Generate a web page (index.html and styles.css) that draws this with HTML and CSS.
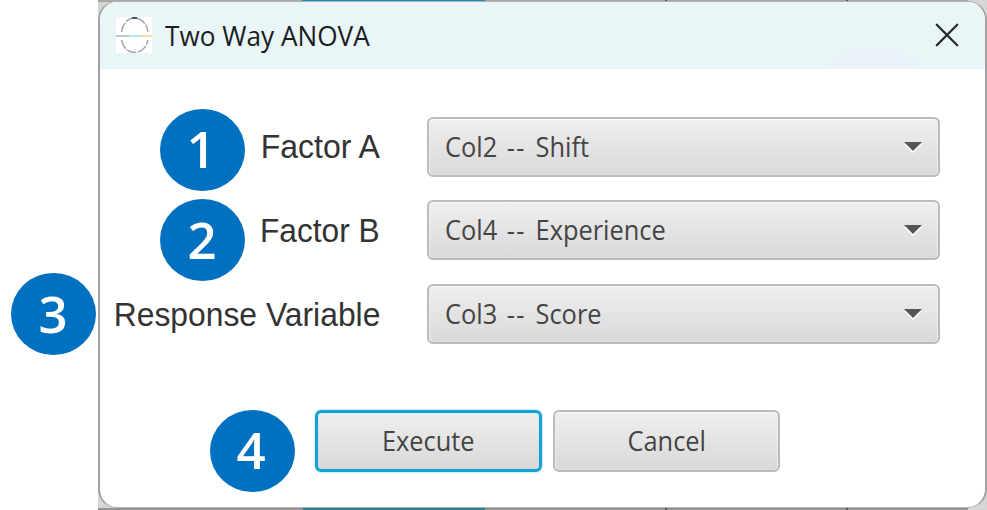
FILE: index.html
```
<!DOCTYPE html>
<html lang="en">
<head>
<meta charset="utf-8">
<title>Two Way ANOVA</title>
<link rel="stylesheet" href="styles.css">
</head>
<body>
<main class="stage">
  <div class="sheet">
    <section class="dialog">
      <header class="titlebar">
        <svg class="app-icon" width="36" height="36" viewBox="0 0 36 36" fill="none">
          <rect width="36" height="36" fill="#fff"/>
          <path d="M5.500 15C6.500 7 11.500 1 18.500 1S31 7 32 15" stroke="#a3a7ab" stroke-width="1.500" stroke-dasharray="10 1.500"/>
          <path d="M16 1h5" stroke="#42576a" stroke-width="2"/>
          <path d="M5.500 23C7 30 11.500 35.500 18.500 35.500S30.500 30 32 23" stroke="#a3a7ab" stroke-width="1.500" stroke-dasharray="10 1.500"/>
          <path d="M0 19h13" stroke="#a9b5be" stroke-width="1.600"/>
          <path d="M13 19h12" stroke="#9fe0ec" stroke-width="1.600"/>
          <path d="M25 19h11" stroke="#f6cd92" stroke-width="1.600"/>
        </svg>
        <h1 class="title"><span class="fit fit-title">Two Way ANOVA</span></h1>
        <svg class="close" width="24" height="24" viewBox="0 0 24 24"><path d="M1.800 1.800l20.400 20.400M22.200 1.800L1.800 22.200" stroke="#24292b" stroke-width="2.300" stroke-linecap="round"/></svg>
      </header>
      <div class="form">
        <div class="label"><span class="fit fit-a">Factor A</span></div>
        <div class="select"><span class="fit fit-value">Col2 <span class="dashes">--</span> Shift</span><svg class="arrow" width="18" height="11" viewBox="0 0 18 11"><path d="M0 2h18L9 11z" fill="#fff"/><path d="M0 0h18L9 9z" fill="#555"/></svg></div>
        <div class="label"><span class="fit fit-b">Factor B</span></div>
        <div class="select"><span class="fit fit-value">Col4 <span class="dashes">--</span> Experience</span><svg class="arrow" width="18" height="11" viewBox="0 0 18 11"><path d="M0 2h18L9 11z" fill="#fff"/><path d="M0 0h18L9 9z" fill="#555"/></svg></div>
        <div class="label"><span class="fit fit-response">Response Variable</span></div>
        <div class="select"><span class="fit fit-value">Col3 <span class="dashes">--</span> Score</span><svg class="arrow" width="18" height="11" viewBox="0 0 18 11"><path d="M0 2h18L9 11z" fill="#fff"/><path d="M0 0h18L9 9z" fill="#555"/></svg></div>
      </div>
      <div class="actions">
        <button class="button primary"><span class="fit fit-button">Execute</span></button>
        <button class="button"><span class="fit fit-button">Cancel</span></button>
      </div>
    </section>
  </div>
  <div class="badge badge-1">1</div>
  <div class="badge badge-2">2</div>
  <div class="badge badge-3">3</div>
  <div class="badge badge-4">4</div>
</main>
</body>
</html>
```
FILE: styles.css
```
* { box-sizing: border-box; }
body { margin: 0; background: #fff; overflow: hidden; }
.stage {
  position: relative;
  width: 987px;
  height: 510px;
  padding-left: 98px;
  font-family: "Open Sans", "Noto Sans", sans-serif;
}
.sheet {
  height: 510px;
  padding: 1px 0 2px;
  background:
    linear-gradient(90deg, transparent 204px, #168fb2 204px 387px, transparent 387px) 0 0 / 100% 3px no-repeat,
    linear-gradient(90deg, transparent 205px, #247f91 205px 387px, transparent 387px) 0 100% / 100% 3px no-repeat,
    linear-gradient(90deg, transparent 567px, #555 567px 569px, transparent 569px 748px, #555 748px 750px, transparent 750px) 0 0 / 100% 100% no-repeat,
    linear-gradient(#aaa6a6, #aaa6a6) 0 0 / 870px 2px no-repeat,
    linear-gradient(#929292, #929292) 0 100% / 870px 2px no-repeat,
    #d6d6d6;
}
.dialog {
  height: 507px;
  overflow: hidden;
  background: #fff;
  border: 1px solid #b2b2b2;
  border-left: 2px solid #a2a2a2;
  border-right: 2px solid #a2a2a2;
  border-radius: 19px;
}
.titlebar {
  display: flex;
  align-items: center;
  height: 67px;
  padding: 0 26px 0 16px;
  background: radial-gradient(ellipse 60px 24px at 775px 64px, #eaf2fa, transparent), #e9f5f7;
}
.app-icon { display: block; margin-top: -1px; }
.title { flex: 1; margin: -1px 0 0 13px; font-size: 28px; font-weight: 400; line-height: 40px; color: #1b1e1f; }
.close { margin-top: -1px; }
.fit { display: inline-block; white-space: nowrap; transform-origin: left center; }
.fit-title { transform: scaleX(.935); }
.form {
  display: grid;
  grid-template-columns: 280px 513px;
  grid-template-rows: repeat(3, 60px);
  gap: 23.5px 47px;
  margin-top: 47.5px;
}
.label {
  display: flex;
  align-items: center;
  justify-content: flex-end;
  font-family: "Liberation Sans", sans-serif;
  font-size: 33px;
  color: #333;
}
.label .fit { transform-origin: right center; }
.fit-a { transform: scaleX(.97); }
.fit-b { transform: scaleX(.96); padding-top: 2px; }
.fit-response { transform: scaleX(.965); padding-top: 2px; }
.select, .button {
  border: 2px solid #bbb;
  border-radius: 6px;
  background: linear-gradient(#efefef, #d9d9d9);
  box-shadow: inset 0 1px 1px #fafafa, inset 1px 0 1px #eee, inset -1px 0 1px #eee;
  color: #444;
  font-family: inherit;
  font-size: 27px;
}
.select { display: flex; align-items: center; justify-content: space-between; padding: 0 16px; }
.fit-value { transform: scaleX(.94); word-spacing: 3.2px; margin-top: -1px; }
.dashes { letter-spacing: 1.5px; }
.arrow { display: block; margin-top: 1px; }
.actions { display: flex; gap: 11px; margin: 66.500px 0 0 215px; }
.button { width: 227px; height: 62px; padding: 0 0 2px; }
.button .fit { transform: scaleX(.94); transform-origin: center; }
.primary { border: 3px solid #12a3d6; box-shadow: 0 0 2px #72c7e2, inset 0 0 1px #79c8e0; }
.badge {
  position: absolute;
  display: flex;
  align-items: center;
  justify-content: center;
  width: 85px;
  height: 82px;
  padding: 0 1px 2px 0;
  border-radius: 50%;
  background: #0070c0;
  color: #fff;
  font-size: 51px;
  font-weight: 600;
  line-height: 1;
}
.badge-1 { left: 160px; top: 109px; padding: 0 3px 4px 0; }
.badge-2 { left: 160px; top: 199px; }
.badge-3 { left: 11px; top: 273px; }
.badge-4 { left: 210px; top: 410px; padding: 0 3px 3px 0; }
```
